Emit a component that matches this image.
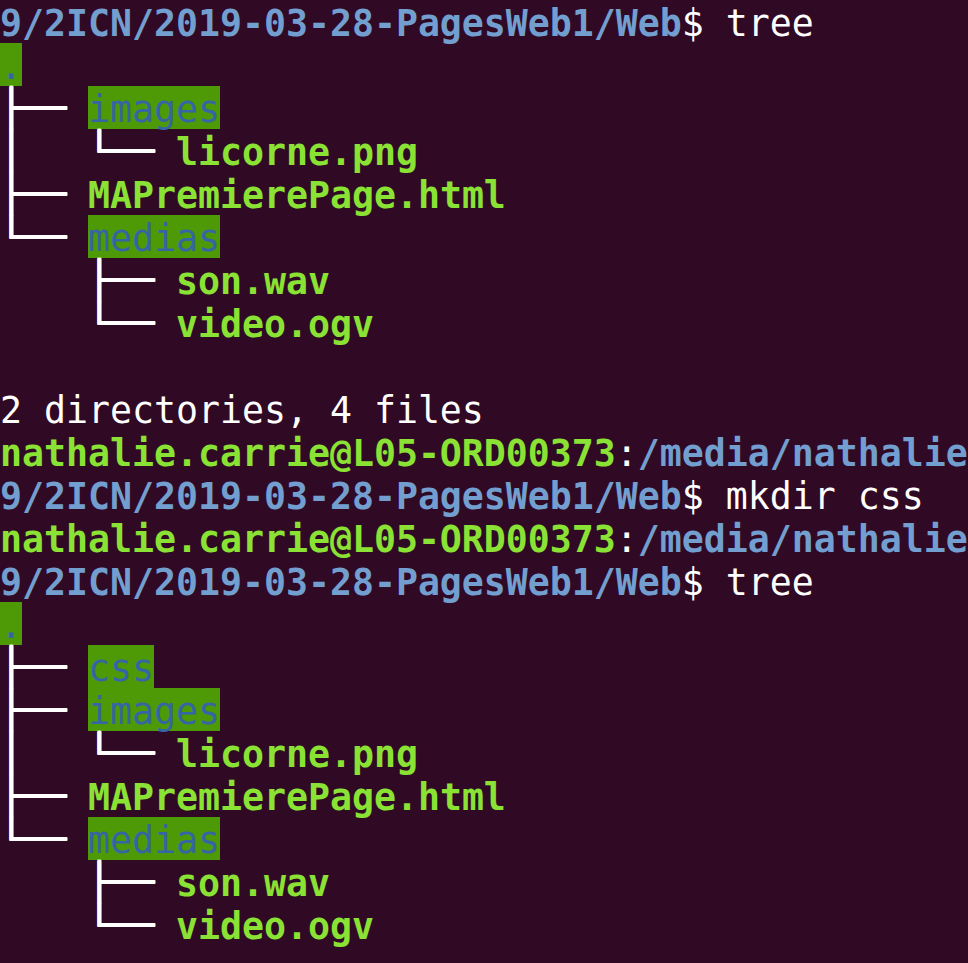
import React from "react"

// terminal colours (Ubuntu aubergine theme)
const PATH = "font-bold text-[#729fcf] [vertical-align:-2px]"
const HOST = "font-bold text-[#8ae234] [vertical-align:-2px]"
const FILE = "font-bold text-[#8ae234] [vertical-align:-2px]"
const TXT = "text-white [vertical-align:-2px]"
const TREE = "font-bold text-white [text-shadow:1px_0_0_#fff,0_1px_0_#fff,1px_1px_0_#fff]"
const DIR = "dir"

type Seg = [string, string]

const prompt = (cmd: string): Seg[] => [
  ["9/2ICN/2019-03-28-PagesWeb1/Web", PATH],
  ["$ " + cmd, TXT],
]

const host: Seg[] = [
  ["nathalie.carrie@L05-ORD00373", HOST],
  [":", TXT],
  ["/media/nathalie.carrie/DATA/2018-201", PATH],
]

const firstTree: Seg[][] = [
  [[".", DIR]],
  [["├── ", TREE], ["images", DIR]],
  [["│   └── ", TREE], ["licorne.png", FILE]],
  [["├── ", TREE], ["MAPremierePage.html", FILE]],
  [["└── ", TREE], ["medias", DIR]],
  [["    ├── ", TREE], ["son.wav", FILE]],
  [["    └── ", TREE], ["video.ogv", FILE]],
]

const secondTree: Seg[][] = [
  [[".", DIR]],
  [["├── ", TREE], ["css", DIR]],
  [["├── ", TREE], ["images", DIR]],
  [["│   └── ", TREE], ["licorne.png", FILE]],
  [["├── ", TREE], ["MAPremierePage.html", FILE]],
  [["└── ", TREE], ["medias", DIR]],
  [["    ├── ", TREE], ["son.wav", FILE]],
  [["    └── ", TREE], ["video.ogv", FILE]],
]

const lines: Seg[][] = [
  prompt("tree"),
  ...firstTree,
  [],
  [["2 directories, 4 files", TXT]],
  host,
  prompt("mkdir css"),
  host,
  prompt("tree"),
  ...secondTree,
]

export default function App() {
  return (
    <div className="w-[968px] h-[963px] overflow-hidden bg-[#300a24] font-['DejaVu_Sans_Mono',monospace] text-[36.54px] leading-[43px]">
      {lines.map((line, i) => (
        <div key={i} className="h-[43px] whitespace-pre">
          {line.map(([text, cls], j) =>
            cls === DIR ? (
              // directory entries: blue on green, highlight fills the whole row
              <span key={j} className="inline-block h-[43px] bg-[#4e9a06] text-[#3465a4]">
                <span className="[vertical-align:-2px]">{text}</span>
              </span>
            ) : (
              <span key={j} className={cls}>
                {text}
              </span>
            )
          )}
        </div>
      ))}
    </div>
  )
}
